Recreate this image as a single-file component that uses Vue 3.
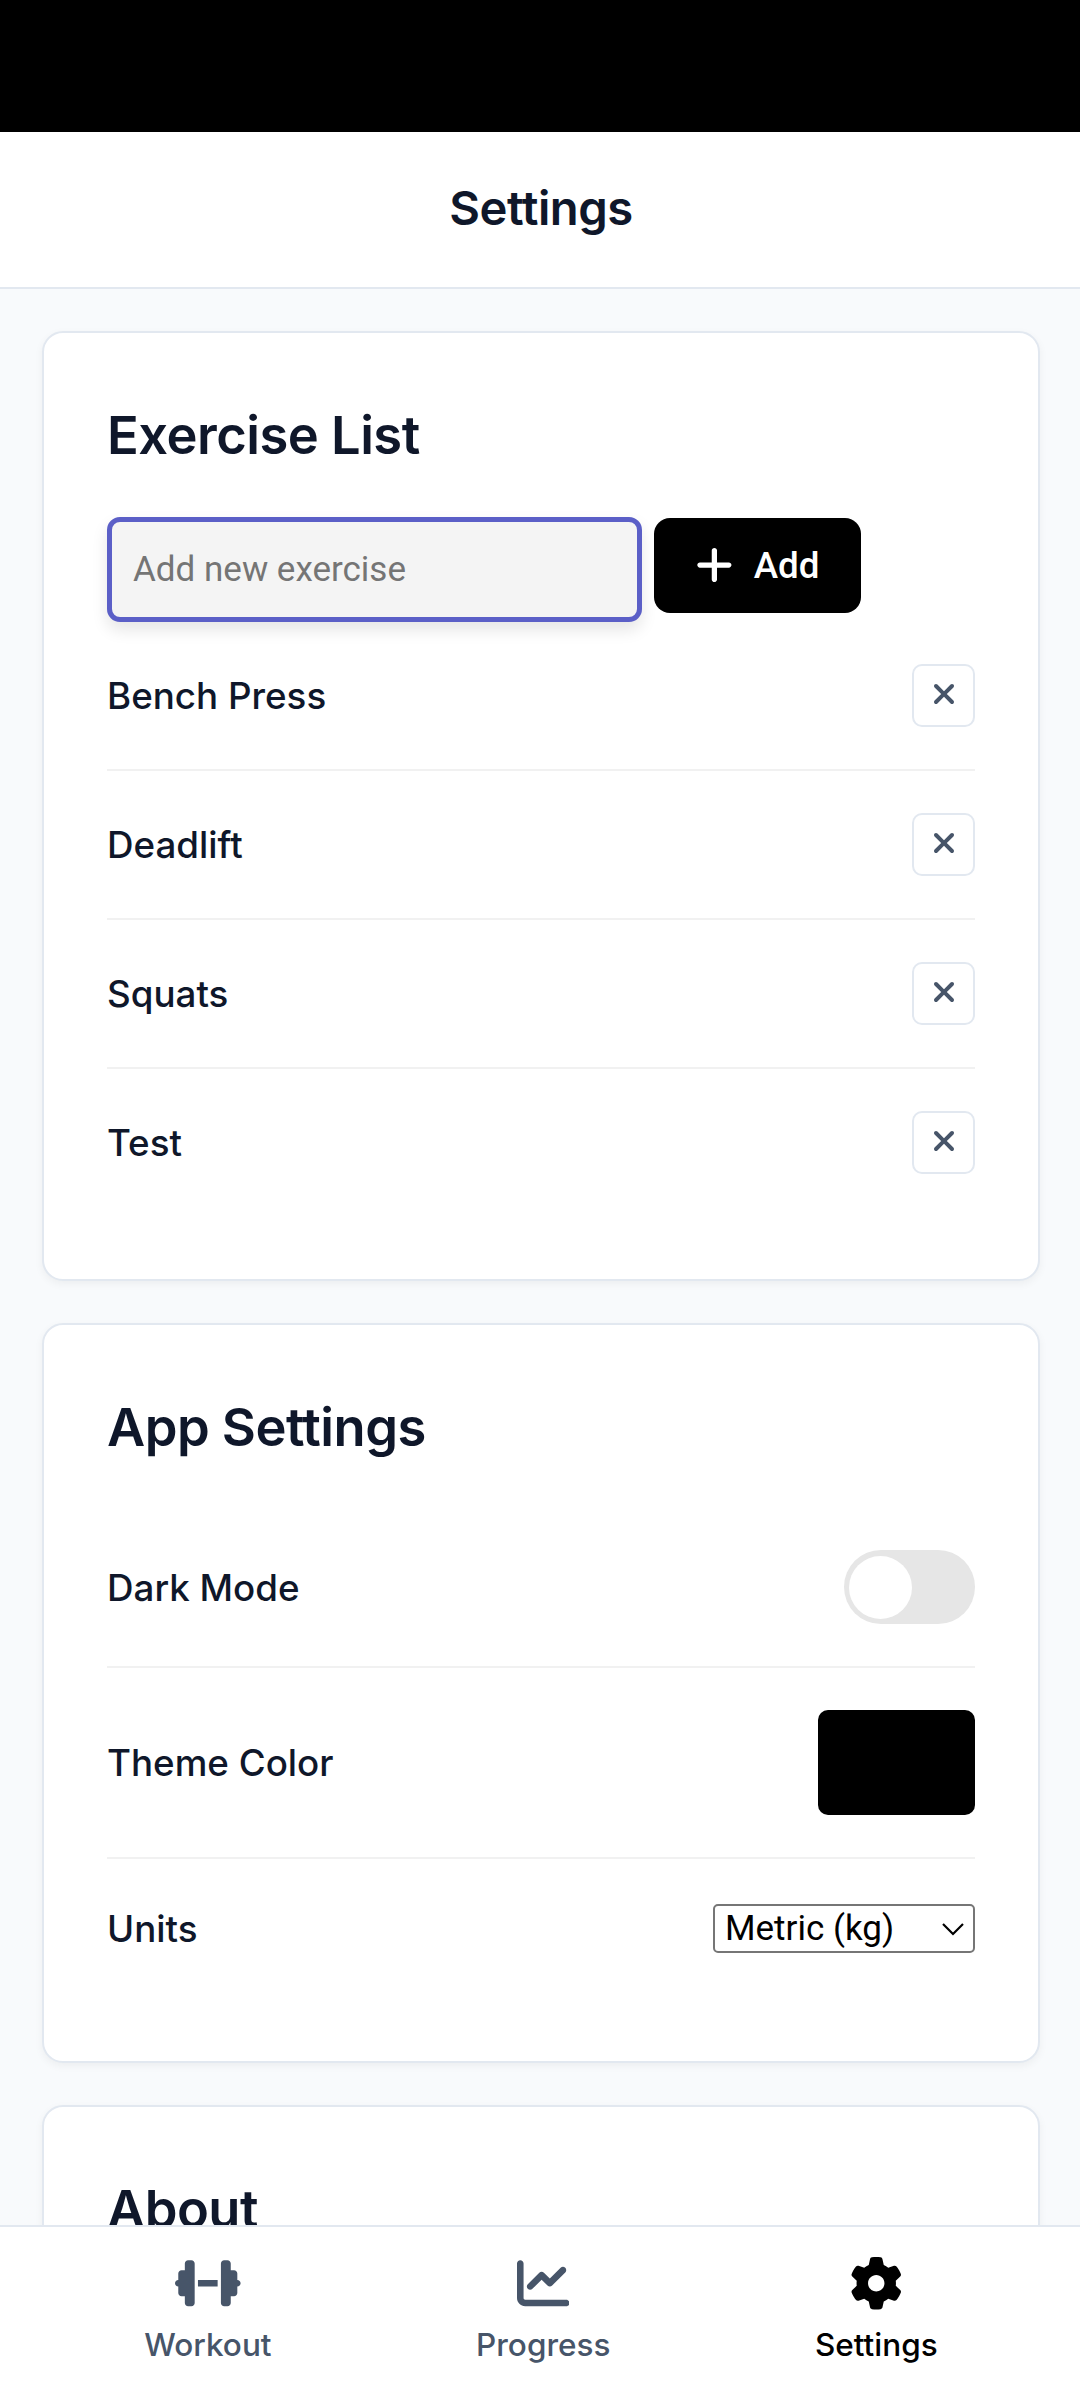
<script setup>
import { ref } from 'vue'

const exercises = ref(['Bench Press', 'Deadlift', 'Squats', 'Test'])
const newExercise = ref('')
</script>

<template>
  <div class="app">
    <div class="status-bar"></div>
    <header class="header"><h1>Settings</h1></header>

    <main class="content">
      <section class="card exercises">
        <h2>Exercise List</h2>
        <div class="add-form">
          <input v-model="newExercise" class="input" type="text" placeholder="Add new exercise" />
          <button class="add-btn">
            <svg class="plus" viewBox="0 0 448 512"><path d="M432 256c0 17.69-14.33 32.01-32 32.01H256v144c0 17.69-14.33 31.99-32 31.99s-32-14.3-32-31.99v-144H48c-17.67 0-32-14.32-32-32.01s14.33-31.99 32-31.99H192v-144c0-17.69 14.33-32.01 32-32.01s32 14.32 32 32.01v144h144C417.7 224 432 238.3 432 256z" /></svg>
            <span>Add</span>
          </button>
        </div>
        <div v-for="name in exercises" :key="name" class="row">
          <span class="label">{{ name }}</span>
          <button class="delete-btn">
            <svg viewBox="0 0 320 512"><path d="M310.6 361.4c12.5 12.5 12.5 32.75 0 45.25C304.4 412.9 296.2 416 288 416s-16.38-3.125-22.62-9.375L160 301.3L54.63 406.6C48.38 412.9 40.19 416 32 416S15.63 412.9 9.375 406.6c-12.5-12.5-12.5-32.75 0-45.25l105.4-105.4L9.375 150.6c-12.5-12.5-12.5-32.75 0-45.25s32.75-12.5 45.25 0L160 210.8l105.4-105.4c12.5-12.5 32.75-12.5 45.25 0s12.5 32.75 0 45.25l-105.4 105.4L310.6 361.4z" /></svg>
          </button>
        </div>
      </section>

      <section class="card">
        <h2>App Settings</h2>
        <div class="row toggle-row">
          <span class="label">Dark Mode</span>
          <div class="toggle"><div class="knob"></div></div>
        </div>
        <div class="row color-row">
          <span class="label">Theme Color</span>
          <div class="swatch"></div>
        </div>
        <div class="row">
          <span class="label">Units</span>
          <div class="select">
            <span>Metric (kg)</span>
            <svg viewBox="0 0 24 14"><path d="M2 2l10 10L22 2" /></svg>
          </div>
        </div>
      </section>

      <section class="card">
        <h2>About</h2>
      </section>
    </main>

    <nav class="nav">
      <div class="nav-item">
        <svg class="wide" viewBox="0 0 640 512"><path d="M128 32h32c17.7 0 32 14.3 32 32v384c0 17.7-14.3 32-32 32h-32c-17.7 0-32-14.3-32-32v-64H64c-17.7 0-32-14.3-32-32v-64c-17.7 0-32-14.3-32-32s14.3-32 32-32v-64c0-17.7 14.3-32 32-32h32V64c0-17.7 14.3-32 32-32zM224 224h192v64H224zM480 32h32c17.7 0 32 14.3 32 32v64h32c17.7 0 32 14.3 32 32v64c17.7 0 32 14.3 32 32s-14.3 32-32 32v64c0 17.7-14.3 32-32 32h-32v64c0 17.7-14.3 32-32 32h-32c-17.7 0-32-14.3-32-32V64c0-17.7 14.3-32 32-32z" /></svg>
        <span>Workout</span>
      </div>
      <div class="nav-item">
        <svg viewBox="0 0 512 512"><path d="M64 400C64 408.8 71.16 416 80 416H480C497.7 416 512 430.3 512 448C512 465.7 497.7 480 480 480H80C35.82 480 0 444.2 0 400V64C0 46.33 14.33 32 32 32C49.67 32 64 46.33 64 64V400zM342.6 278.6C330.1 291.1 309.9 291.1 297.4 278.6L240 221.3L150.6 310.6C138.1 323.1 117.9 323.1 105.4 310.6C92.88 298.1 92.88 277.9 105.4 265.4L217.4 153.4C229.9 140.9 250.1 140.9 262.6 153.4L320 210.7L425.4 105.4C437.9 92.88 458.1 92.88 470.6 105.4C483.1 117.9 483.1 138.1 470.6 150.6L342.6 278.6z" /></svg>
        <span>Progress</span>
      </div>
      <div class="nav-item active">
        <svg viewBox="0 0 512 512"><path d="M495.9 166.6C499.2 175.2 496.4 184.9 489.6 191.2L446.3 230.6C447.4 238.9 448 247.4 448 256C448 264.6 447.4 273.1 446.3 281.4L489.6 320.8C496.4 327.1 499.2 336.8 495.9 345.4C491.5 357.3 486.2 368.8 480.2 379.7L475.5 387.8C468.9 398.8 461.5 409.2 453.4 419.1C447.4 426.2 437.7 428.7 428.9 425.9L373.2 408.1C359.8 418.4 344.9 427 329.2 433.6L316.7 490.7C314.7 499.7 307.7 506.1 298.5 508.5C284.7 510.8 270.5 512 256 512C241.5 512 227.3 510.8 213.5 508.5C204.3 506.1 197.3 499.7 195.3 490.7L182.8 433.6C167 427 152.2 418.4 138.8 408.1L83.14 425.9C74.3 428.7 64.55 426.2 58.63 419.1C50.52 409.2 43.12 398.8 36.52 387.8L31.84 379.7C25.77 368.8 20.49 357.3 16.06 345.4C12.82 336.8 15.55 327.1 22.41 320.8L65.67 281.4C64.57 273.1 64 264.6 64 256C64 247.4 64.57 238.9 65.67 230.6L22.41 191.2C15.55 184.9 12.82 175.3 16.06 166.6C20.49 154.7 25.78 143.2 31.84 132.3L36.51 124.2C43.12 113.2 50.52 102.8 58.63 92.95C64.55 85.8 74.3 83.32 83.14 86.14L138.8 103.9C152.2 93.56 167 84.96 182.8 78.43L195.3 21.33C197.3 12.25 204.3 5.04 213.5 3.51C227.3 1.201 241.5 0 256 0C270.5 0 284.7 1.201 298.5 3.51C307.7 5.04 314.7 12.25 316.7 21.33L329.2 78.43C344.9 84.96 359.8 93.56 373.2 103.9L428.9 86.14C437.7 83.32 447.4 85.8 453.4 92.95C461.5 102.8 468.9 113.2 475.5 124.2L480.2 132.3C486.2 143.2 491.5 154.7 495.9 166.6zM256 336C300.2 336 336 300.2 336 256C336 211.8 300.2 176 256 176C211.8 176 176 211.8 176 256C176 300.2 211.8 336 256 336z" /></svg>
        <span>Settings</span>
      </div>
    </nav>
  </div>
</template>

<style>
html,
body {
  margin: 0;
  overflow: hidden;
  background: #f8fafc;
}
</style>

<style scoped>
* {
  box-sizing: border-box;
}
.app {
  display: flex;
  flex-direction: column;
  width: 1082px;
  height: 2400px;
  overflow: hidden;
  background: #f8fafc;
  color: #0f172a;
  font-family: Inter, 'Noto Sans', sans-serif;
  line-height: 1.5;
}
.status-bar {
  flex: none;
  height: 132px;
  background: #000;
}
.header {
  flex: none;
  height: 157px;
  padding-top: 40px;
  background: #fff;
  border-bottom: 2px solid #e2e8f0;
  text-align: center;
}
h1 {
  margin: 0;
  font-size: 47.25px;
  font-weight: 600;
  letter-spacing: -0.01em;
  line-height: 71px;
}
.content {
  flex: 1;
  min-height: 0;
  overflow: hidden;
  display: flex;
  flex-direction: column;
  gap: 42px;
  padding: 42px 42px 0;
}
.card {
  flex: none;
  padding: 63px;
  background: #fff;
  border: 2px solid #e2e8f0;
  border-radius: 21px;
  box-shadow: 0 3px 8px rgba(0, 0, 0, 0.05);
}
h2 {
  margin: 0 0 42px;
  font-size: 52.5px;
  font-weight: 600;
  letter-spacing: -0.01em;
  line-height: 79px;
}
.add-form {
  display: flex;
  align-items: flex-start;
  gap: 12px;
}
.input {
  width: 535px;
  height: 105px;
  margin: 0;
  padding: 0 21px;
  border: 5px solid #5b5fc7;
  border-radius: 13px;
  outline: none;
  background: #f4f4f4;
  box-shadow: 0 8px 16px rgba(0, 0, 0, 0.1);
  font-family: Roboto, sans-serif;
  font-size: 35px;
}
.input::placeholder {
  color: #757575;
}
.add-btn {
  display: flex;
  align-items: center;
  gap: 21px;
  width: 207px;
  height: 95px;
  margin-top: 1px;
  padding: 0 42px;
  border: 0;
  border-radius: 16px;
  background: #000;
  color: #fff;
  font-family: Roboto, sans-serif;
  font-size: 36.75px;
  font-weight: 500;
}
.plus {
  flex: none;
  width: 36.75px;
  height: 42px;
  margin-bottom: 1px;
  fill: currentColor;
}
.row {
  display: flex;
  align-items: center;
  justify-content: space-between;
  padding: 42px 0;
  border-bottom: 2px solid #f1f1f1;
}
.row:last-child {
  border-bottom: 0;
}
.label {
  font-size: 36.75px;
  font-weight: 500;
  line-height: 55px;
}
.delete-btn {
  display: flex;
  justify-content: center;
  width: 63px;
  height: 63px;
  padding: 12px 0 0;
  border: 2px solid #e2e8f0;
  border-radius: 10px;
  background: #fff;
}
.delete-btn svg {
  width: 20px;
  height: 32px;
  fill: #475569;
}
.toggle-row {
  padding-top: 41px;
}
.toggle {
  width: 131px;
  height: 74px;
  padding: 6px 5px 5px;
  border-radius: 37px;
  background: #e6e6e6;
}
.knob {
  width: 63px;
  height: 63px;
  border-radius: 50%;
  background: #fff;
}
.swatch {
  width: 157px;
  height: 105px;
  border-radius: 10px;
  background: #000;
}
.select {
  display: flex;
  align-items: center;
  justify-content: space-between;
  width: 262px;
  height: 49px;
  padding: 0 8px 0 10px;
  border: 2px solid #767676;
  border-radius: 5px;
  background: #fff;
  color: #000;
  font-family: Roboto, sans-serif;
  font-size: 35px;
  line-height: 41px;
}
.select svg {
  width: 24px;
  height: 14px;
  fill: none;
  stroke: #000;
  stroke-width: 2.2;
}
.nav {
  flex: none;
  display: flex;
  justify-content: space-around;
  height: 175px;
  padding: 30px 42px 0;
  background: #fff;
  border-top: 2px solid #e2e8f0;
  color: #475569;
}
.nav-item {
  display: flex;
  flex-direction: column;
  align-items: center;
  gap: 11.5px;
  font-size: 31.5px;
  font-weight: 500;
  line-height: 47px;
}
.nav-item svg {
  width: 52.5px;
  height: 52.5px;
  fill: currentColor;
}
.nav-item svg.wide {
  width: 65.6px;
}
.active {
  color: #000;
}
</style>
